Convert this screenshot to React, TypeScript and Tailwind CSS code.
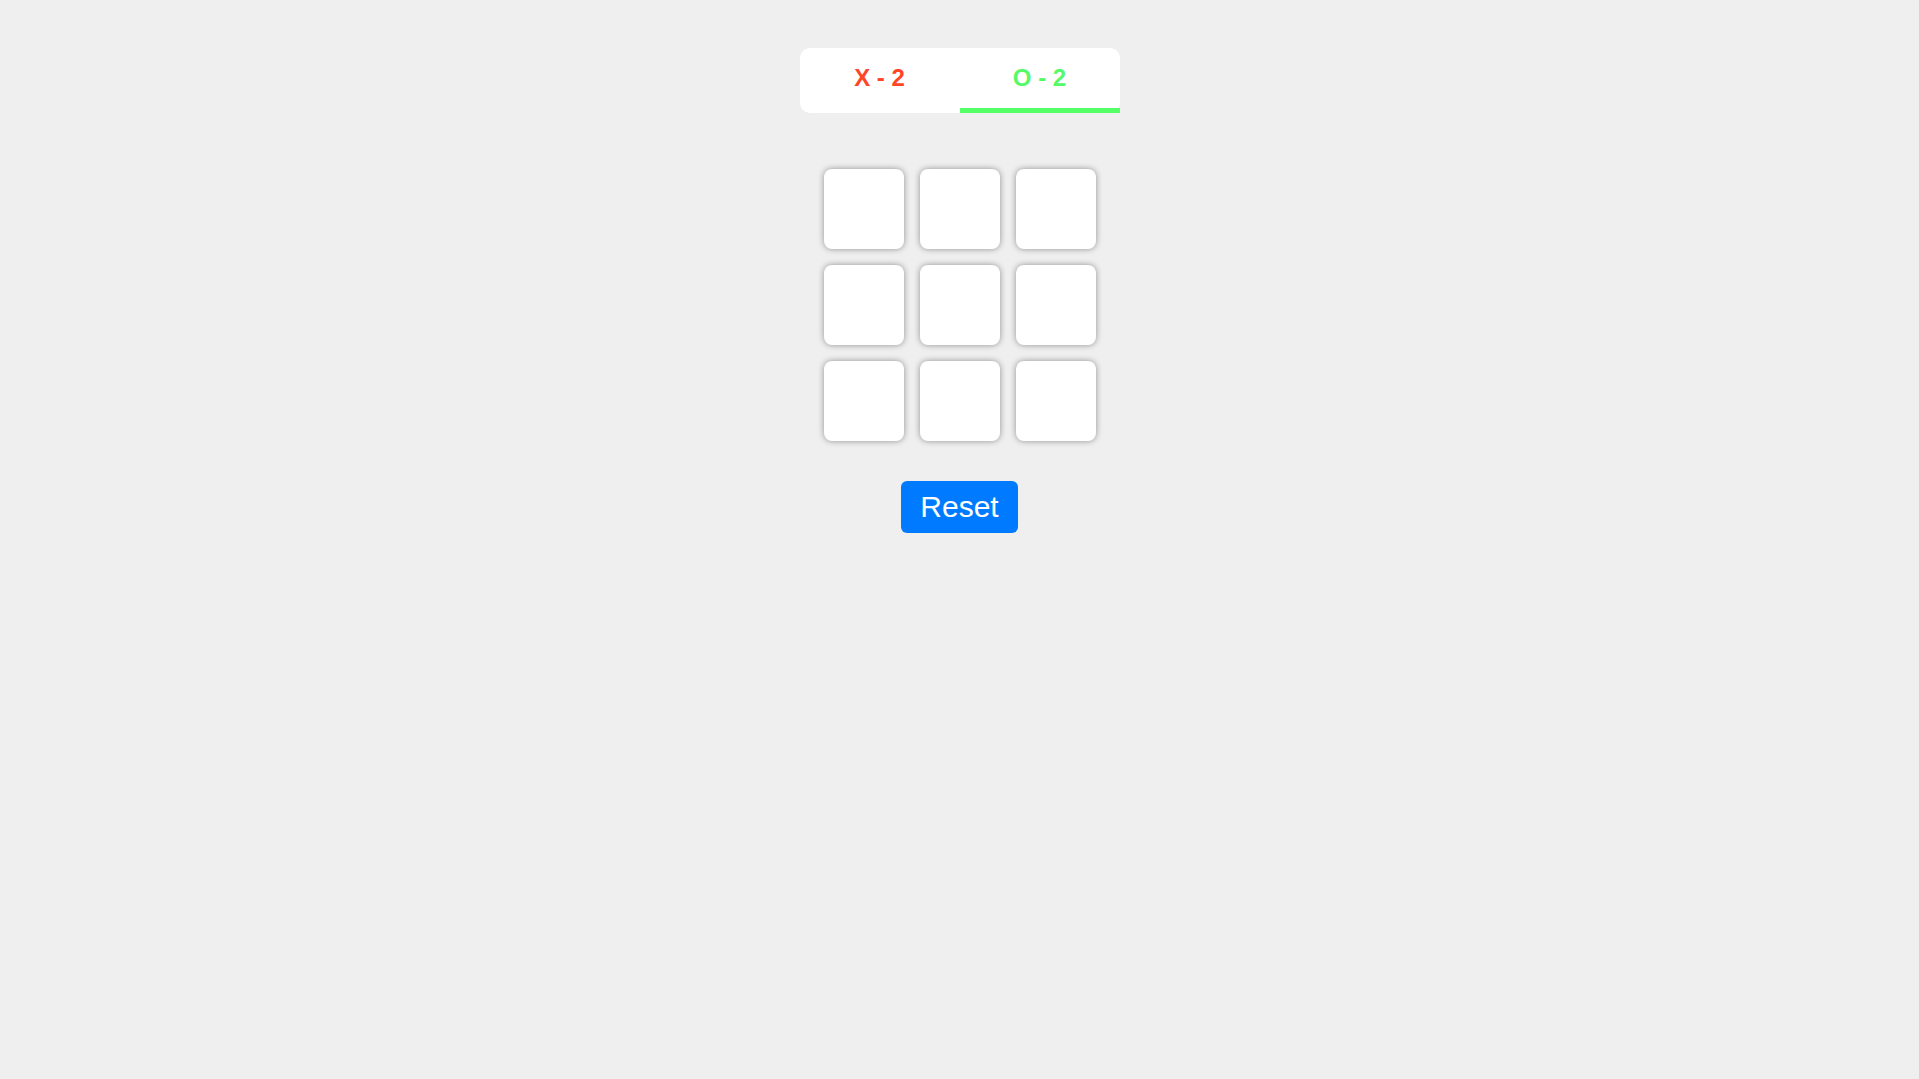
import React from "react";

export default function App() {
  const cells = Array.from({ length: 9 });
  return (
    <div
      className="min-h-screen w-full bg-[#efefef] flex flex-col items-center pt-[48px]"
      style={{ fontFamily: '"Liberation Sans", Arial, sans-serif' }}
    >
      <div className="relative flex w-[320px] h-[65px] bg-white rounded-[10px]">
        <div className="flex-1 flex items-center justify-center pb-[6px] text-[24px] font-bold text-[#ff4526]">
          X - 2
        </div>
        <div className="flex-1 flex items-center justify-center pb-[6px] text-[24px] font-bold text-[#55fa66]">
          O - 2
        </div>
        <div className="absolute right-0 bottom-0 w-[160px] h-[5px] bg-[#55ff66]" />
      </div>
      <div className="grid grid-cols-3 gap-[16px] mt-[56px]">
        {cells.map((_, i) => (
          <div
            key={i}
            className="w-[80px] h-[80px] bg-white rounded-[8px] shadow-[0_0_6px_rgba(0,0,0,0.4)]"
          />
        ))}
      </div>
      <button className="mt-[40px] h-[52px] px-[19px] bg-[#007bff] text-white text-[30px] rounded-[6px] leading-none">
        Reset
      </button>
    </div>
  );
}
